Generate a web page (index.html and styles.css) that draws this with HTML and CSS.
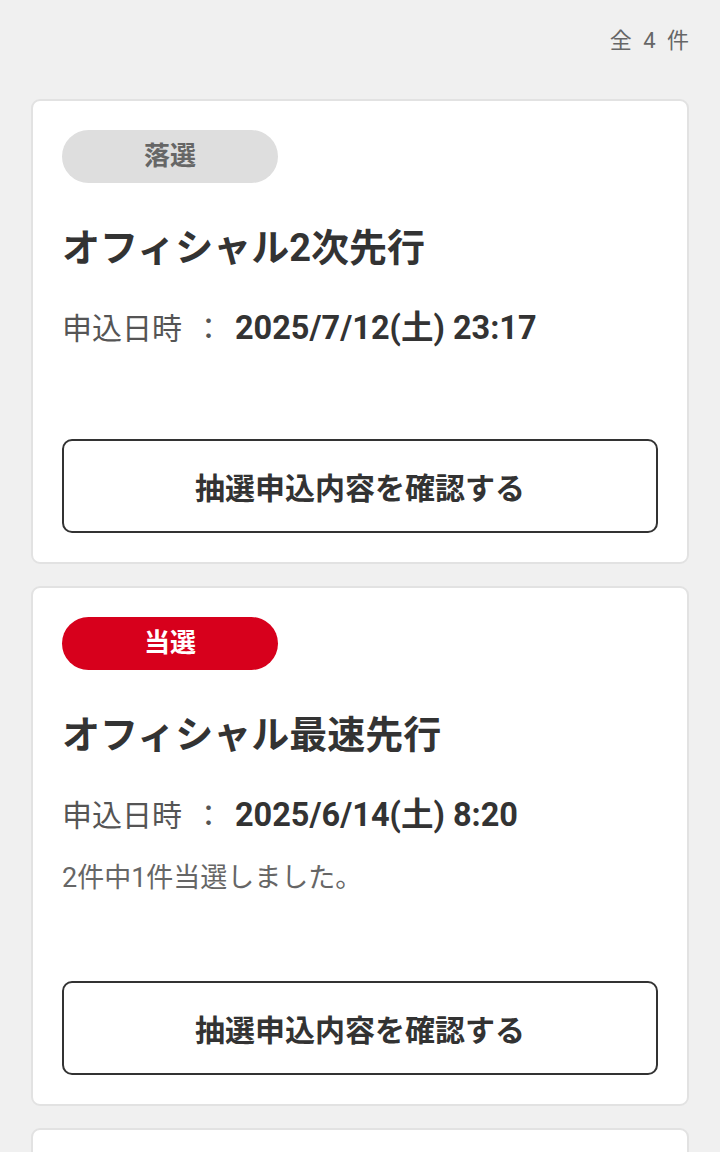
FILE: index.html
```html
<!DOCTYPE html>
<html lang="ja">
<head>
    <meta charset="UTF-8">
    <meta name="viewport" content="width=device-width, initial-scale=1.0">
    <title>抽選申込履歴</title>
    <link rel="stylesheet" href="styles.css">
</head>
<body>
<div class="page">
    <div class="total">全 4 件</div>

    <div class="entry-card">
        <div class="badge badge-lost">落選</div>
        <h2 class="entry-title">オフィシャル2次先行</h2>
        <div class="entry-date">
            <span class="label">申込日時</span>
            <span class="colon">：</span>
            <span class="value">2025/7/12(土) 23:17</span>
        </div>
        <button class="confirm-btn">抽選申込内容を確認する</button>
    </div>

    <div class="entry-card">
        <div class="badge badge-won">当選</div>
        <h2 class="entry-title">オフィシャル最速先行</h2>
        <div class="entry-date">
            <span class="label">申込日時</span>
            <span class="colon">：</span>
            <span class="value">2025/6/14(土) 8:20</span>
        </div>
        <p class="entry-note">2件中1件当選しました。</p>
        <button class="confirm-btn">抽選申込内容を確認する</button>
    </div>

    <div class="entry-card"></div>
</div>
</body>
</html>
```

FILE: styles.css
```css
body {
    margin: 0;
    background-color: #f0f0f0;
    font-family: Roboto, "Noto Sans CJK JP", sans-serif;
    color: #333;
}

.page {
    padding: 0 31px;
}

.total {
    padding-top: 26px;
    margin-bottom: 43px;
    margin-right: -3px;
    text-align: right;
    font-size: 22px;
    line-height: 30px;
    letter-spacing: 3px;
    color: #666;
}

.entry-card {
    background-color: #fff;
    border: 2px solid #e2e2e2;
    border-radius: 9px;
    padding: 29px;
    margin-bottom: 22px;
    min-height: 60px;
}

.badge {
    width: 216px;
    height: 53px;
    line-height: 53px;
    border-radius: 27px;
    text-align: center;
    font-size: 26px;
    font-weight: bold;
}

.badge-lost {
    background-color: #dedede;
    color: #666;
}

.badge-won {
    background-color: #d7001c;
    color: #fff;
}

.entry-title {
    margin: 40px 0 0;
    font-size: 38px;
    line-height: 50px;
    font-weight: bold;
    color: #333;
}

.entry-date {
    margin-top: 35px;
    font-size: 30px;
    line-height: 40px;
}

.entry-date .label {
    color: #555;
}

.entry-date .colon {
    color: #555;
    margin: 0 4px;
}

.entry-date .value {
    font-size: 32.5px;
    font-weight: bold;
    color: #333;
}

.entry-note {
    margin: 29px 0 0;
    font-size: 27px;
    line-height: 26px;
    color: #666;
}

.confirm-btn {
    display: block;
    width: 100%;
    height: 94px;
    margin-top: 90px;
    background-color: #fff;
    border: 2px solid #333;
    border-radius: 10px;
    font-family: inherit;
    font-size: 30px;
    font-weight: bold;
    color: #333;
}
```
